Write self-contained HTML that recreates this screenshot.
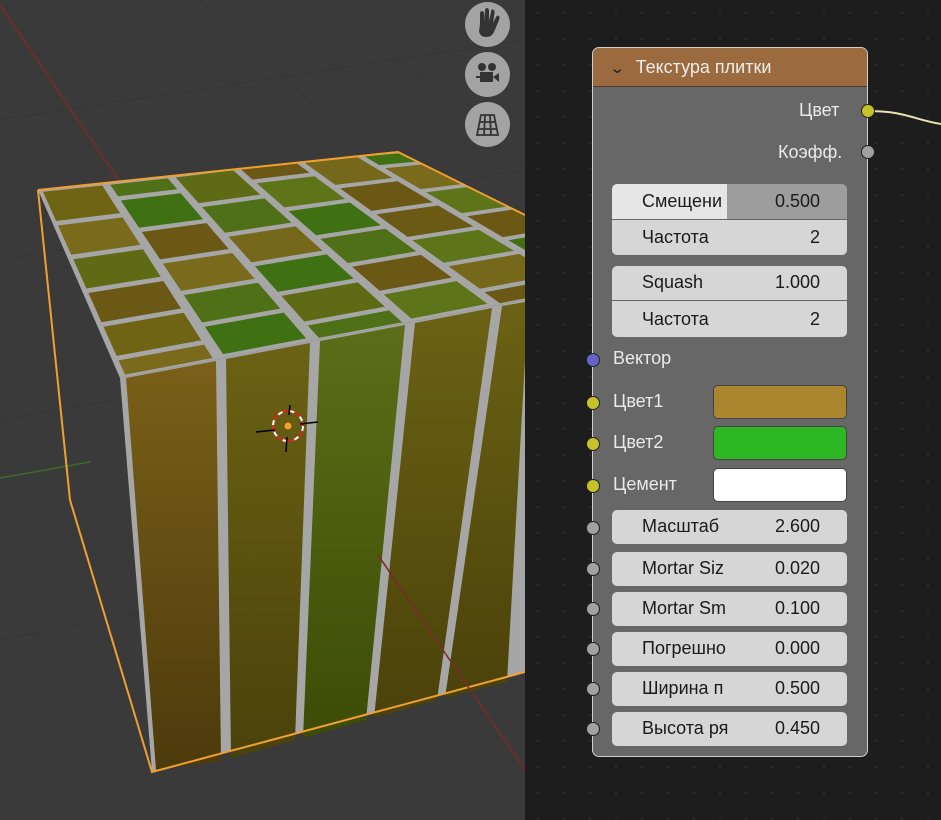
<!DOCTYPE html>
<html><head><meta charset="utf-8">
<style>
html,body{margin:0;padding:0;width:941px;height:820px;overflow:hidden;background:#1c1c1c;font-family:"Liberation Sans","DejaVu Sans",sans-serif;}
#vp{position:absolute;left:0;top:0;width:525px;height:820px;background:#3a3a3a;overflow:hidden;}
#ne{position:absolute;left:525px;top:0;width:416px;height:820px;background:#1d1d1d;
background-image:radial-gradient(circle,#2c2c2c 1px,transparent 1.3px);background-size:26px 26px;}
.ic{position:absolute;left:465px;width:45px;height:45px;border-radius:50%;background:#a3a3a3;}
#node{position:absolute;left:592px;top:47px;width:276px;height:710px;background:#676767;border:1px solid #cfcfcf;border-radius:7px;overflow:hidden;box-sizing:border-box;}
#hdr{height:38px;background:#9b6a3e;color:#eee;font-size:18px;line-height:38px;border-bottom:1px solid #4a3a2a;}
.t{position:absolute;color:#eaeaea;font-size:18px;}
.f{position:absolute;left:612px;width:235px;background:#d6d6d6;color:#1a1a1a;font-size:18px;box-sizing:border-box;}
.f span{position:absolute;}
.f .l{left:30px}.f .v{right:27px}
.s{position:absolute;width:14px;height:14px;border-radius:50%;border:1.5px solid #222;box-sizing:border-box;}
.y{background:#c7c22a}.g{background:#a1a1a1}.p{background:#6464c8}
.sw{position:absolute;left:713px;width:134px;height:34px;border-radius:5px;border:1px solid #444;box-sizing:border-box;}
</style></head><body>
<div id="vp">
<svg width="525" height="820" style="position:absolute;left:0;top:0">
<defs>
<clipPath id="tc"><polygon points="38,190 398,152 525,215 525,300 120,378"/></clipPath>
<linearGradient id="gb" x1="0" y1="0" x2="0" y2="1"><stop offset="0" stop-color="#7a6018"/><stop offset="1" stop-color="#4d3a0c"/></linearGradient>
<linearGradient id="go" x1="0" y1="0" x2="0" y2="1"><stop offset="0" stop-color="#6b6214"/><stop offset="1" stop-color="#4a420a"/></linearGradient>
<linearGradient id="gg" x1="0" y1="0" x2="0" y2="1"><stop offset="0" stop-color="#5c6e18"/><stop offset="1" stop-color="#3c4c06"/></linearGradient>
</defs>
<g stroke="#353535" stroke-width="1" opacity="0.8">
<line x1="0" y1="120" x2="525" y2="40"/><line x1="0" y1="260" x2="525" y2="170"/>
<line x1="0" y1="420" x2="525" y2="330"/><line x1="0" y1="640" x2="525" y2="540"/>
<line x1="200" y1="0" x2="525" y2="300"/><line x1="330" y1="0" x2="525" y2="170"/>
</g>
<line x1="0" y1="5" x2="122" y2="185" stroke="#7a2a2a" stroke-width="1.5"/>
<line x1="0" y1="478" x2="90" y2="462" stroke="#3e6a2a" stroke-width="1.5"/>
<polygon points="38,190 398,152 525,215 525,300 120,378" fill="#a6a6a6"/>
<g id="tiles" clip-path="url(#tc)"></g>
<polygon points="120,378 525,300 525,672 152,772" fill="#a6a6a6"/>
<polygon points="126,378 216,361 221,761 156,770" fill="url(#gb)"/>
<polygon points="226,359 310,343 295,740 231,758" fill="url(#go)"/>
<polygon points="320,341 405,325 366,720 303,738" fill="url(#gg)"/>
<polygon points="415,323 492,308 437,700 374,718" fill="url(#go)"/>
<polygon points="502,306 525,302 525,360 507,682 445,698" fill="url(#go)"/>
<polyline points="38,190 398,152 525,215" fill="none" stroke="#f0a030" stroke-width="2"/>
<polyline points="38,190 70,500 152,772 525,672" fill="none" stroke="#f0a030" stroke-width="2"/>
<line x1="378" y1="555" x2="525" y2="770" stroke="#7a2a2a" stroke-width="1.5"/>
<circle cx="288" cy="426" r="15" fill="none" stroke="#d22" stroke-width="2"/>
<circle cx="288" cy="426" r="15" fill="none" stroke="#fff" stroke-width="2" stroke-dasharray="5 7"/>
<circle cx="288" cy="426" r="3.5" fill="#f0a030"/>
<g stroke="#000" stroke-width="1.5"><line x1="256" y1="432" x2="275" y2="430"/><line x1="300" y1="424" x2="318" y2="422"/><line x1="290" y1="405" x2="289" y2="415"/><line x1="287" y1="437" x2="286" y2="452"/></g>
</svg>
<div class="ic" style="top:2px"><svg width="45" height="45"><path d="M15 22 L15 12 Q15 9 17 9 Q19 9 19 12 L19 19 L20 9 Q20 6 22 6 Q24 6 24 9 L24 19 L26 10 Q26 7 28 7.5 Q30 8 29.5 11 L28 21 L31 15 Q32 13 34 14 Q35 15 34 18 L29 30 Q27 35 21 35 Q15 35 14 29 Z" fill="#333"/></svg></div>
<div class="ic" style="top:52px"><svg width="45" height="45"><circle cx="17" cy="15" r="4" fill="#333"/><circle cx="27" cy="15" r="4" fill="#333"/><rect x="15" y="20" width="13" height="10" fill="#333"/><path d="M28 25 L34 21 L34 30 Z" fill="#333"/><rect x="11" y="24" width="4" height="2" fill="#333"/></svg></div>
<div class="ic" style="top:102px"><svg width="45" height="45"><g stroke="#333" stroke-width="1.8" fill="none"><path d="M16 13 L29 13 L33 33 L12 33 Z"/><path d="M14.5 20 L30.5 20 M13.3 27 L31.7 27 M20 13 L19 33 M25 13 L26 33"/></g></svg></div>
</div>
<div id="ne">
<svg width="416" height="820" style="position:absolute;left:0;top:0"><path d="M343 111 C380 111 390 120 416 124" stroke="#e8e4b0" stroke-width="2" fill="none"/></svg>
</div>
<div id="node"><div id="hdr"><span style="margin-left:18px;font-size:15px;color:#222;display:inline-block;transform:scaleX(1.3)">&#8964;</span><span style="margin-left:12px">Текстура плитки</span></div></div>
<div class="t" style="left:799px;top:100px">Цвет</div>
<div class="t" style="left:778px;top:142px">Коэфф.</div>
<div class="s y" style="left:861px;top:104px"></div>
<div class="s g" style="left:861px;top:145px"></div>

<div class="f" style="top:184px;height:35px;border-radius:5px 5px 0 0;background:linear-gradient(90deg,#e6e6e6 0,#e6e6e6 115px,#9d9d9d 115px)"><span class="l" style="top:7px">Смещени</span><span class="v" style="top:7px">0.500</span></div>
<div class="f" style="top:220px;height:35px;border-radius:0 0 5px 5px"><span class="l" style="top:7px">Частота</span><span class="v" style="top:7px">2</span></div>
<div class="f" style="top:266px;height:34px;border-radius:5px 5px 0 0"><span class="l" style="top:6px">Squash</span><span class="v" style="top:6px">1.000</span></div>
<div class="f" style="top:301px;height:36px;border-radius:0 0 5px 5px"><span class="l" style="top:8px">Частота</span><span class="v" style="top:8px">2</span></div>

<div class="s p" style="left:586px;top:353px"></div><div class="t" style="left:613px;top:348px">Вектор</div>
<div class="s y" style="left:586px;top:396px"></div><div class="t" style="left:613px;top:391px">Цвет1</div><div class="sw" style="top:385px;background:#ab862f"></div>
<div class="s y" style="left:586px;top:437px"></div><div class="t" style="left:613px;top:432px">Цвет2</div><div class="sw" style="top:426px;background:#2db724"></div>
<div class="s y" style="left:586px;top:479px"></div><div class="t" style="left:613px;top:474px">Цемент</div><div class="sw" style="top:468px;background:#fff"></div>

<div class="s g" style="left:586px;top:521px"></div><div class="f" style="top:510px;height:34px;border-radius:5px"><span class="l" style="top:6px">Масштаб</span><span class="v" style="top:6px">2.600</span></div>
<div class="s g" style="left:586px;top:562px"></div><div class="f" style="top:552px;height:34px;border-radius:5px"><span class="l" style="top:6px">Mortar Siz</span><span class="v" style="top:6px">0.020</span></div>
<div class="s g" style="left:586px;top:602px"></div><div class="f" style="top:592px;height:34px;border-radius:5px"><span class="l" style="top:6px">Mortar Sm</span><span class="v" style="top:6px">0.100</span></div>
<div class="s g" style="left:586px;top:642px"></div><div class="f" style="top:632px;height:34px;border-radius:5px"><span class="l" style="top:6px">Погрешно</span><span class="v" style="top:6px">0.000</span></div>
<div class="s g" style="left:586px;top:682px"></div><div class="f" style="top:672px;height:34px;border-radius:5px"><span class="l" style="top:6px">Ширина п</span><span class="v" style="top:6px">0.500</span></div>
<div class="s g" style="left:586px;top:722px"></div><div class="f" style="top:712px;height:34px;border-radius:5px"><span class="l" style="top:6px">Высота ря</span><span class="v" style="top:6px">0.450</span></div>

<script>
(function(){
var B=[[38,190],[105,183],[170,176],[235,168],[298,161],[358,155],[418,150],[478,145]];
var F=[[120,378],[220,359],[315,341],[410,323],[497,306],[585,289],[670,272],[760,255]];
var cols=["#6b5814","#5e6a14","#4f7016","#6e6414","#7a6a1c","#4a7a14","#5e7418","#6a5a16","#3f7012","#76681a"];
function L(a,b,t){return [a[0]+(b[0]-a[0])*t,a[1]+(b[1]-a[1])*t];}
var g=document.getElementById('tiles'),s='',n=0;
for(var i=0;i<7;i++){
 var off=(i%2)*0.09;
 for(var k=-1;k<7;k++){
  var t0=k*0.18+off,t1=t0+0.18;
  t0=Math.max(t0,0)+0.012;t1=Math.min(t1,1)-0.012;
  if(t1<=t0)continue;
  var s0=0.06,s1=0.94;
  function P(sv,tv){var a=L(B[i],F[i],tv),b=L(B[i+1],F[i+1],tv);return L(a,b,sv);}
  var pts=[P(s0,t0),P(s1,t0),P(s1,t1),P(s0,t1)].map(function(p){return p[0].toFixed(1)+','+p[1].toFixed(1)}).join(' ');
  n=(n*7+3+i)%cols.length;
  s+='<polygon points="'+pts+'" fill="'+cols[n]+'"/>';
 }
}
g.innerHTML=s;
})();
</script>
</body></html>
